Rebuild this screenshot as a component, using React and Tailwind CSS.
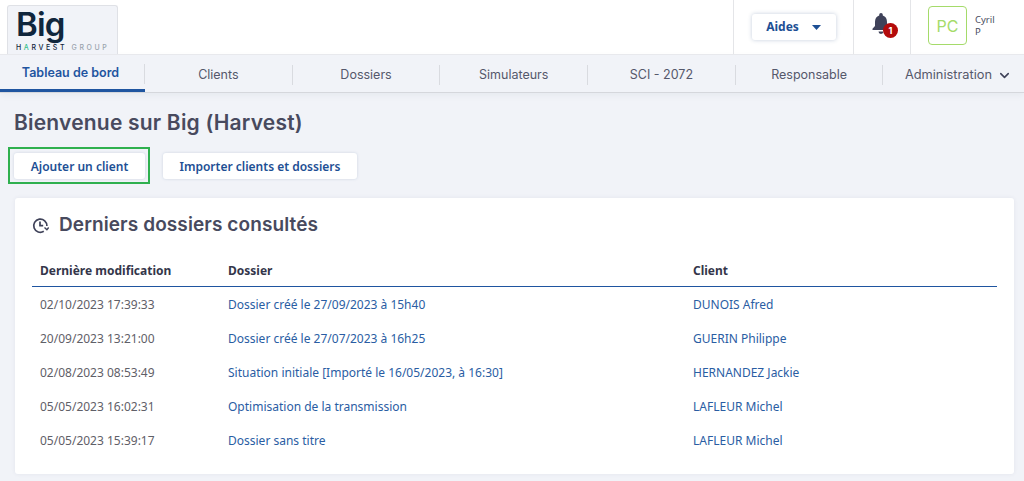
import React from 'react';
import { ChevronDown } from 'lucide-react';

const heading = "font-['Inter','Noto_Sans',sans-serif]";
const body = "font-['Noto_Sans','Open_Sans',sans-serif]";

const tabs = ['Clients', 'Dossiers', 'Simulateurs', 'SCI - 2072', 'Responsable'];

const rows = [
  ['02/10/2023 17:39:33', 'Dossier créé le 27/09/2023 à 15h40', 'DUNOIS Afred'],
  ['20/09/2023 13:21:00', 'Dossier créé le 27/07/2023 à 16h25', 'GUERIN Philippe'],
  ['02/08/2023 08:53:49', 'Situation initiale [Importé le 16/05/2023, à 16:30]', 'HERNANDEZ Jackie'],
  ['05/05/2023 16:02:31', 'Optimisation de la transmission', 'LAFLEUR Michel'],
  ['05/05/2023 15:39:17', 'Dossier sans titre', 'LAFLEUR Michel'],
];

const Header = () => (
  <header className="flex h-[54px] bg-white">
    <div className="ml-[7px] mt-[5px] flex h-[49px] w-[111px] flex-col rounded-t-[3px] border border-b-0 border-[#dfe1e6] bg-[#f1f3f8] pl-[8px] pt-[3px]">
      <span className={`${heading} h-[30px] text-[33px] font-semibold leading-[30px] tracking-[-0.8px] text-[#10263c]`}>Big</span>
      <span className={`${heading} mt-[5px] whitespace-nowrap text-[7px] font-medium leading-[8px] tracking-[2.600px] text-[#10263c]`}>
        H<span className="text-[#35c08e]">A</span>RVEST <span className="text-[#9aa3ad]">GROUP</span>
      </span>
    </div>
    <div className="ml-auto flex">
      <div className="flex w-[120px] items-center justify-center border-l border-[#e4e5e8]">
        <button className={`${body} flex h-[26px] w-[84px] items-center justify-center gap-[13px] rounded-[3px] bg-white text-[12px] font-bold text-[#1d4f94] shadow-[0_0_4px_rgba(60,90,140,0.3)]`}>
          Aides
          <svg width="9" height="5" viewBox="0 0 9 5"><path d="M0 0h9L4.500 5z" fill="#1d4f94" /></svg>
        </button>
      </div>
      <div className="flex w-[57px] items-center justify-center border-l border-[#e4e5e8]">
        <div className="relative ml-[-2px] mt-[-6px]">
          <svg width="18" height="22" viewBox="0 0 18 22" className="block">
            <path d="M9 0a1.800 1.800 0 0 1 1.800 1.800v.6C13.600 3.200 15 5.700 15 9v4l2.500 2.800V17H.5v-1.200L3 13V9c0-3.300 1.400-5.800 4.200-6.600v-.6A1.800 1.800 0 0 1 9 0zM6.500 18.500h5a2.500 2.500 0 0 1-5 0z" fill="#3f4259" />
          </svg>
          <span className={`${heading} absolute left-[11px] top-[10px] flex h-[15px] w-[15px] items-center justify-center rounded-full bg-[#b30b0b] text-[9px] font-bold text-white`}>1</span>
        </div>
      </div>
      <div className="flex w-[114px] items-start border-l border-[#e4e5e8] pl-[17px] pt-[6px]">
        <div className={`${heading} flex h-[39px] w-[39px] items-center justify-center rounded-[4px] border border-[#a5db6a] text-[16px] text-[#a5db6a]`}>PC</div>
        <div className={`${body} ml-[8px] mt-[8px] text-[9.500px] leading-[12px] text-[#4a4c60]`}>
          <div>Cyril</div>
          <div>P</div>
        </div>
      </div>
    </div>
  </header>
);

const Nav = () => (
  <nav className={`${heading} flex h-[39px] border-t border-b border-t-[#e8e9ed] border-b-[#d5d7dc] bg-[#f1f3f8] text-[12.500px] text-[#55586b] shadow-[0_3px_6px_rgba(90,95,120,0.06)]`}>
    <a className="flex h-[37px] w-[145px] items-center border-b-[3px] border-[#1f55a0] pt-[3px] font-semibold text-[#1f55a0]">
      <span className="flex-1 pr-[3px] text-center">Tableau de bord</span>
      <span className="h-[20px] w-px bg-[#d9dbe0]" />
    </a>
    {tabs.map((tab) => (
      <a key={tab} className="flex h-[37px] w-[147.700px] items-center justify-center pt-[3px]">
        <span className="flex-1 text-center">{tab}</span>
        <span className="h-[20px] w-px bg-[#d9dbe0]" />
      </a>
    ))}
    <a className="flex h-[37px] flex-1 items-center justify-end gap-[5px] pr-[12px] pt-[3px] text-[12.800px]">
      Administration
      <ChevronDown size={15} strokeWidth={2.500} className="text-[#3f4259]" />
    </a>
  </nav>
);

const HistoryIcon = () => (
  <svg width="17" height="17" viewBox="0 0 17 17" fill="none" stroke="#3f4259" strokeWidth="1.700">
    <path d="M11.800 14.300A6.600 6.600 0 1 1 14.900 9" />
    <path d="M8 4.500V8.600h3.200" />
    <path d="M12.500 10.500l2.400 2.300 1.800-2.300" strokeWidth="1.400" />
  </svg>
);

const App = () => (
  <div className={`${body} h-[481px] overflow-hidden bg-[#f1f3f8]`}>
    <Header />
    <Nav />
    <main className="px-[15px]">
      <h1 className={`${heading} ml-[-1px] mt-[15px] text-[21px] font-semibold leading-[30px] tracking-[0.2px] text-[#484a5e]`}>Bienvenue sur Big (Harvest)</h1>
      <div className="mt-[9px] flex items-center">
        <div className="ml-[-7px] border-2 border-[#2fb04f] pb-[3px] pl-[4px] pr-[3px] pt-[4px]">
          <button className="block h-[26px] w-[131px] rounded-[3px] bg-white pt-px text-[12px] font-semibold text-[#1d4f94] shadow-[0_0_3px_rgba(60,90,140,0.2)]">Ajouter un client</button>
        </div>
        <button className="ml-[13px] mt-[1px] h-[26px] w-[194px] rounded-[3px] bg-white pt-px text-[12px] font-semibold text-[#1d4f94] shadow-[0_0_3px_rgba(60,90,140,0.2)]">Importer clients et dossiers</button>
      </div>
      <section className="mt-[14px] h-[276px] w-[999px] rounded-[3px] bg-white px-[17px] pt-[15px] shadow-[0_0_4px_rgba(60,70,100,0.08)]">
        <div className="flex h-[25px] items-center gap-[10px]">
          <HistoryIcon />
          <h2 className={`${heading} text-[19px] font-semibold tracking-[0.1px] text-[#484a5e]`}>Derniers dossiers consultés</h2>
        </div>
        <table className="mt-[19px] w-[965px] table-fixed text-left text-[12px]">
          <thead>
            <tr className="h-[29px] border-b border-[#1f55a0] text-[#34364a]">
              <th className="w-[196px] pl-[8px] font-bold">Dernière modification</th>
              <th className="w-[465px] font-bold">Dossier</th>
              <th className="font-bold">Client</th>
            </tr>
          </thead>
          <tbody>
            {rows.map((row) => (
              <tr key={row[0]} className="h-[34px]">
                <td className="pl-[8px] pt-[4px] text-[#5f6068]">{row[0]}</td>
                <td className="pt-[4px] text-[#2a5da3]">{row[1]}</td>
                <td className="pt-[4px] text-[#2a5da3]">{row[2]}</td>
              </tr>
            ))}
          </tbody>
        </table>
      </section>
    </main>
  </div>
);

export default App;
